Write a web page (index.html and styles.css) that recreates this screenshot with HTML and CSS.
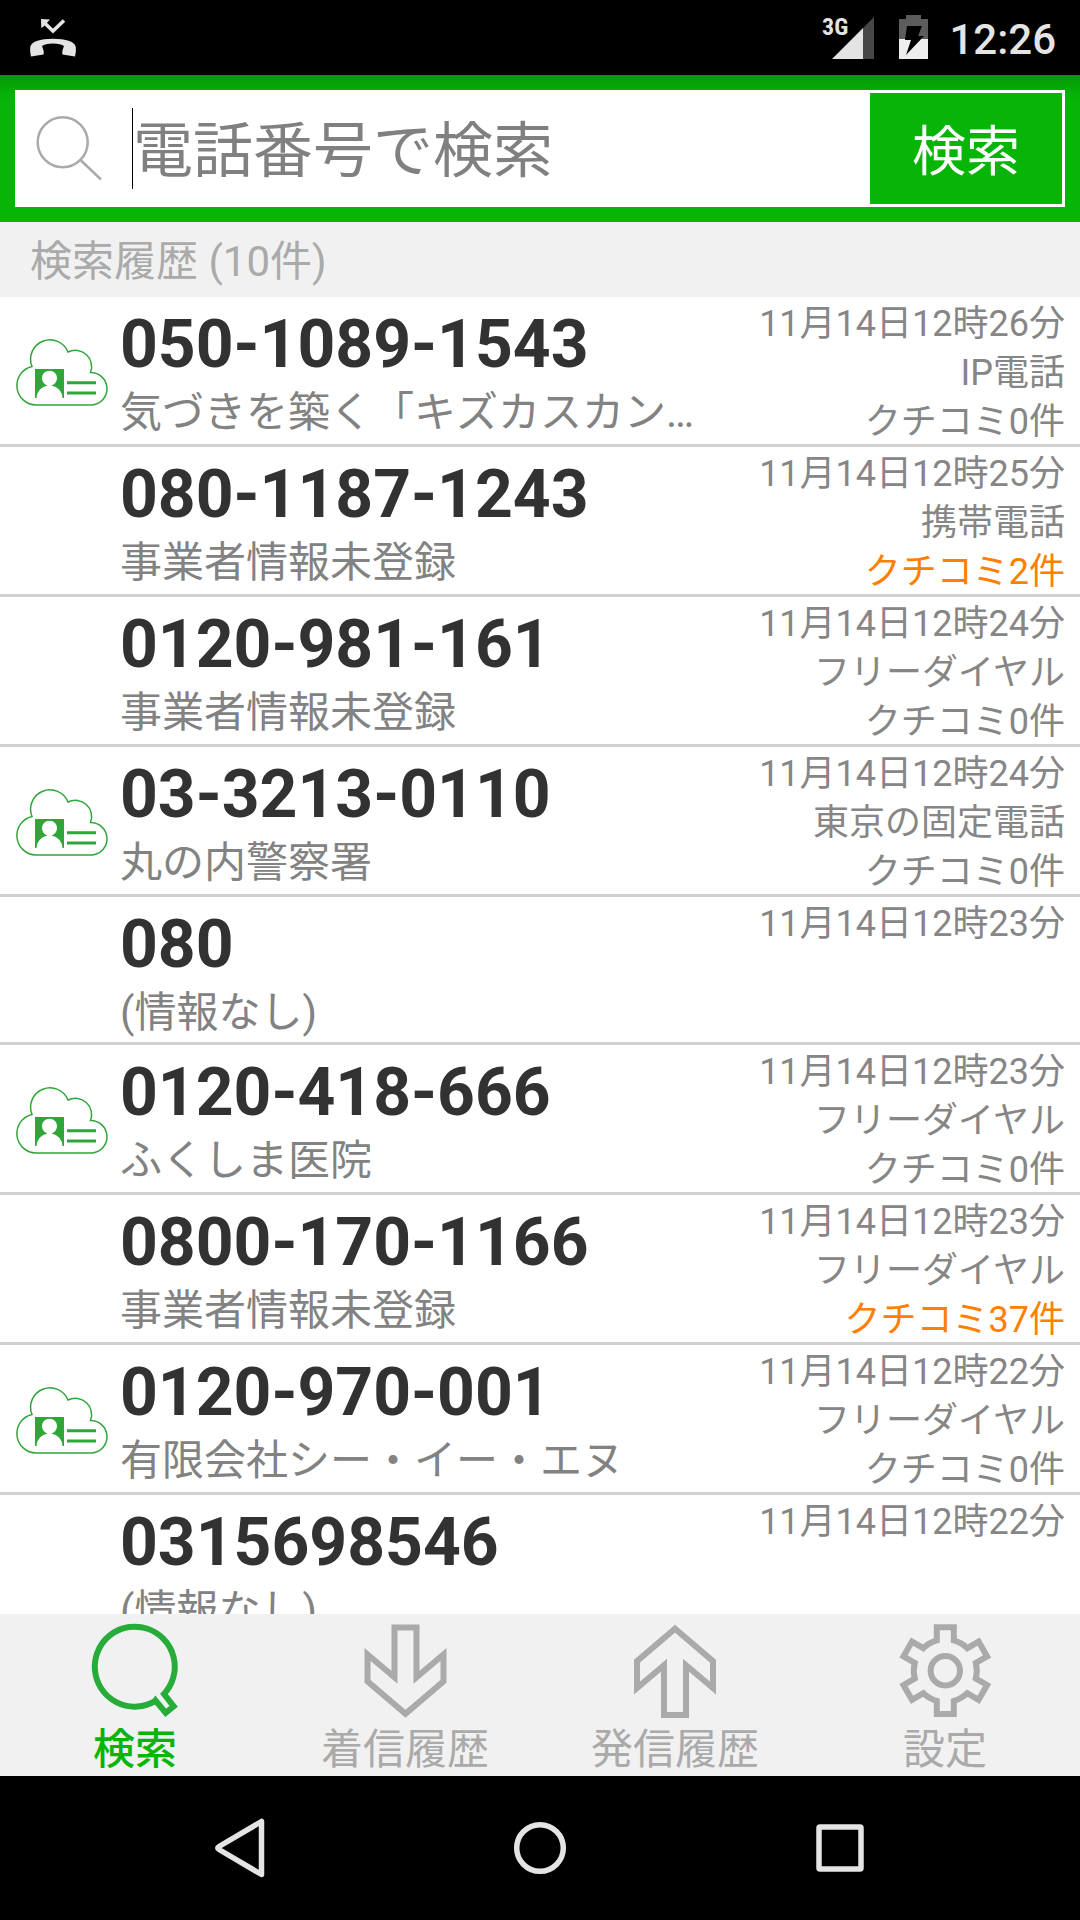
FILE: index.html
```html
<!DOCTYPE html>
<html lang="ja">
<head>
<meta charset="utf-8">
<meta name="viewport" content="width=device-width, initial-scale=1">
<title>検索履歴</title>
<link rel="stylesheet" href="styles.css">
</head>
<body>
<svg class="defs" aria-hidden="true">
  <symbol id="cloud" viewBox="0 0 120 100">
    <path d="M32 45.500A19.500 19.500 0 0 0 36 84H92.500A16.300 16.300 0 0 0 90.500 51.500A16.300 16.300 0 0 0 68 31A19.400 19.400 0 0 0 32 45.500Z" fill="none" stroke="#2fa53a" stroke-width="1.500"/>
    <path d="M35 48H64V77H62.500A13 13 0 0 0 51.500 64.400A7.500 7.500 0 1 0 47.500 64.400A13 13 0 0 0 36.500 77H35Z" fill="#2fa53a"/>
    <path d="M67 61.700H96M67 71.900H96" stroke="#2fa53a" stroke-width="3"/>
  </symbol>
</svg>

<header class="status">
  <svg class="status-missed" viewBox="25 0 60 75" role="img" aria-label="不在着信">
    <path d="M45 22.500L54 31L65 20.500" fill="none" stroke="#e4e4e4" stroke-width="3.600"/>
    <path d="M42 19L51 19.500L48.500 22.300L44.500 26.500L42.300 28Z" fill="#e4e4e4"/>
    <path d="M32 56.500Q30.500 50 31.500 46Q34 39 54 38.700Q74 39 76.500 46Q77.500 50 76 56.500L63.500 54.500Q62.500 52 65 46Q62 43.500 54 43.500Q46 43.500 43 46Q45.500 52 44.500 54.500Z" fill="#e4e4e4"/>
  </svg>
  <div class="status-right">
    <svg class="status-signal" viewBox="0 0 54 75" role="img" aria-label="3G">
      <text class="status-net" x="0" y="35">3G</text>
      <path d="M52 17V59H41V28Z" fill="#474747"/>
      <path d="M41 28V59H10Z" fill="#e4e4e4"/>
    </svg>
    <svg class="status-battery" viewBox="0 0 30 75" role="img" aria-label="充電中">
      <path d="M0 19H7V15H22V19H29V39H0Z" fill="#5c5c5c"/>
      <path d="M0 39H29V59H0Z" fill="#eee"/>
      <path d="M8 26H23L19 36H25L7 55L12 40H6Z" fill="#000"/>
    </svg>
    <time class="status-time">12:26</time>
  </div>
</header>

<main class="app">
  <form class="search">
    <div class="search-box">
      <svg class="search-icon" viewBox="0 0 117 117" aria-hidden="true">
        <circle cx="47.700" cy="52.300" r="25"/>
        <path d="M66 70.500L86 89.500"/>
      </svg>
      <input class="search-input" type="tel" placeholder="電話番号で検索" aria-label="電話番号で検索">
      <button class="search-button" type="button">検索</button>
    </div>
  </form>

  <h1 class="heading">検索履歴 (10件)</h1>

  <ul class="list">
    <li class="row">
      <svg class="row-icon" aria-hidden="true"><use href="#cloud"/></svg>
      <div class="row-main"><h2 class="number">050-1089-1543</h2><p class="name">気づきを築く「キズカスカン…</p></div>
      <div class="row-meta"><span>11月14日12時26分</span><span>IP電話</span><span>クチコミ0件</span></div>
    </li>
    <li class="row">
      <div class="row-main"><h2 class="number">080-1187-1243</h2><p class="name">事業者情報未登録</p></div>
      <div class="row-meta"><span>11月14日12時25分</span><span>携帯電話</span><span class="hot">クチコミ2件</span></div>
    </li>
    <li class="row">
      <div class="row-main"><h2 class="number">0120-981-161</h2><p class="name">事業者情報未登録</p></div>
      <div class="row-meta"><span>11月14日12時24分</span><span>フリーダイヤル</span><span>クチコミ0件</span></div>
    </li>
    <li class="row">
      <svg class="row-icon" aria-hidden="true"><use href="#cloud"/></svg>
      <div class="row-main"><h2 class="number">03-3213-0110</h2><p class="name">丸の内警察署</p></div>
      <div class="row-meta"><span>11月14日12時24分</span><span>東京の固定電話</span><span>クチコミ0件</span></div>
    </li>
    <li class="row">
      <div class="row-main"><h2 class="number">080</h2><p class="name">(情報なし)</p></div>
      <div class="row-meta"><span>11月14日12時23分</span></div>
    </li>
    <li class="row">
      <svg class="row-icon" aria-hidden="true"><use href="#cloud"/></svg>
      <div class="row-main"><h2 class="number">0120-418-666</h2><p class="name">ふくしま医院</p></div>
      <div class="row-meta"><span>11月14日12時23分</span><span>フリーダイヤル</span><span>クチコミ0件</span></div>
    </li>
    <li class="row">
      <div class="row-main"><h2 class="number">0800-170-1166</h2><p class="name">事業者情報未登録</p></div>
      <div class="row-meta"><span>11月14日12時23分</span><span>フリーダイヤル</span><span class="hot">クチコミ37件</span></div>
    </li>
    <li class="row">
      <svg class="row-icon" aria-hidden="true"><use href="#cloud"/></svg>
      <div class="row-main"><h2 class="number">0120-970-001</h2><p class="name">有限会社シー・イー・エヌ</p></div>
      <div class="row-meta"><span>11月14日12時22分</span><span>フリーダイヤル</span><span>クチコミ0件</span></div>
    </li>
    <li class="row">
      <div class="row-main"><h2 class="number">0315698546</h2><p class="name">(情報なし)</p></div>
      <div class="row-meta"><span>11月14日12時22分</span></div>
    </li>
  </ul>
</main>

<nav class="tabs">
  <a class="tab tab-active" href="#search">
    <svg class="tab-icon" viewBox="0 0 100 98" aria-hidden="true"><path d="M70 79.200A40 40 0 1 1 79 72L88.700 84.300L80.700 90.800L70.500 78.500Z"/></svg>
    <span class="tab-label">検索</span>
  </a>
  <a class="tab" href="#incoming">
    <svg class="tab-icon" viewBox="0 0 100 98" aria-hidden="true"><path d="M39.500 5.500H61.500V55.300L88.500 32.500V59.300L50.500 91.700L12.500 59.300V32.500L39.500 55.300Z"/></svg>
    <span class="tab-label">着信履歴</span>
  </a>
  <a class="tab" href="#outgoing">
    <svg class="tab-icon" viewBox="0 0 100 98" aria-hidden="true"><path d="M39 93H61V43.200L88 66V39.200L50 6.800L12 39.200V66L39 43.200Z"/></svg>
    <span class="tab-label">発信履歴</span>
  </a>
  <a class="tab" href="#settings">
    <svg class="tab-icon" viewBox="0 0 100 98" aria-hidden="true"><g transform="translate(50.300 48.700)"><path d="M-8.500-30.300V-43.400H8.500V-30.300A31.500 31.500 0 0 1 22-22.500L33.300-29.100L41.800-14.300L30.500-7.800A31.500 31.500 0 0 1 30.500 7.800L41.800 14.300L33.300 29.100L22 22.500A31.500 31.500 0 0 1 8.500 30.300V43.400H-8.500V30.300A31.500 31.500 0 0 1-22 22.500L-33.300 29.100L-41.800 14.300L-30.500 7.800A31.500 31.500 0 0 1-30.500-7.800L-41.800-14.300L-33.300-29.100L-22-22.500A31.500 31.500 0 0 1-8.500-30.300Z"/><circle r="14.700"/></g></svg>
    <span class="tab-label">設定</span>
  </a>
</nav>

<footer class="system">
  <button class="system-button" type="button" aria-label="戻る"><svg viewBox="0 0 72 72"><path d="M57.500 9.500V62.500L15 37.500Q12.500 36 15 34.500Z"/></svg></button>
  <button class="system-button" type="button" aria-label="ホーム"><svg viewBox="0 0 72 72"><circle cx="36" cy="36" r="23.300"/></svg></button>
  <button class="system-button" type="button" aria-label="最近"><svg viewBox="0 0 72 72"><rect x="15" y="15" width="42" height="42" rx="1"/></svg></button>
</footer>
</body>
</html>
```
FILE: styles.css
```css
* {
  box-sizing: border-box;
}

body {
  margin: 0;
  height: 100vh;
  display: flex;
  flex-direction: column;
  overflow: hidden;
  background: #fff;
  font-family: Roboto, "Noto Sans CJK JP", sans-serif;
  font-size: 42px;
}

.defs {
  display: none;
}

h1, h2, p, ul {
  margin: 0;
  padding: 0;
  font-weight: 400;
}

/* Status bar */
.status {
  flex: none;
  height: 75px;
  padding: 0 24px;
  display: flex;
  justify-content: space-between;
  background: #000;
}

.status-missed {
  width: 60px;
  height: 75px;
}

.status-right {
  display: flex;
}

.status-signal {
  width: 54px;
  height: 75px;
  margin-right: 23px;
}

.status-net {
  fill: #e4e4e4;
  font-family: "Roboto Condensed", Roboto, sans-serif;
  font-size: 24px;
  font-weight: 700;
}

.status-battery {
  width: 30px;
  height: 75px;
  margin-right: 20px;
}

.status-time {
  padding-top: 4px;
  color: #e4e4e4;
  font-weight: 500;
  line-height: 71px;
}

/* Application */
.app {
  flex: 1;
  min-height: 0;
  display: flex;
  flex-direction: column;
}

.search {
  flex: none;
  padding: 15px;
  background: linear-gradient(rgba(0, 0, 0, .16), transparent 24px) #06b506;
}

.search-box {
  height: 117px;
  padding-right: 3px;
  display: flex;
  align-items: center;
  background: #fff;
}

.search-icon {
  flex: none;
  width: 117px;
  height: 117px;
  fill: none;
  stroke: #aaa;
  stroke-width: 2.5;
}

.search-input {
  flex: 1;
  min-width: 0;
  height: 81px;
  padding: 5px 0 0;
  border: 0;
  border-left: 1px solid #000;
  border-radius: 0;
  outline: 0;
  background: none;
  color: #323232;
  font: inherit;
  font-size: 60px;
}

.search-input::placeholder {
  color: #808080;
  opacity: 1;
}

.search-button {
  flex: none;
  width: 192px;
  height: 111px;
  padding: 0 0 2px;
  border: 0;
  background: #06b506;
  color: #fff;
  font: inherit;
  font-size: 54px;
}

.heading {
  flex: none;
  padding: 4px 30px 0;
  background: #f1f1f1;
  color: #aaa;
  font-size: 42px;
  line-height: 71px;
}

/* History list */
.list {
  flex: 1;
  min-height: 0;
  overflow-y: auto;
  scrollbar-width: none;
  list-style: none;
}

.row {
  display: grid;
  grid-template-columns: 120px minmax(0, 1fr) auto;
  padding-right: 15px;
  border-bottom: 3px solid #d1d1d1;
}

.row-icon {
  grid-column: 1;
  align-self: center;
  width: 120px;
  height: 100px;
}

.row-main {
  grid-column: 2;
  padding-top: 9px;
}

.number {
  color: #323232;
  font-size: 66px;
  font-weight: 700;
  line-height: 78px;
}

.name {
  overflow: hidden;
  color: #828282;
  font-size: 42px;
  line-height: 58px;
  white-space: nowrap;
  text-overflow: ellipsis;
}

.row-meta {
  grid-column: 3;
  padding-top: 5px;
  display: flex;
  flex-direction: column;
  align-items: flex-end;
  gap: 5px;
  color: #868686;
  font-size: 36px;
  line-height: 44px;
}

.hot {
  color: #ff8000;
}

/* Tab bar */
.tabs {
  flex: none;
  display: grid;
  grid-template-columns: repeat(4, 1fr);
  padding-top: 8px;
  background: #f1f1f1;
}

.tab {
  display: flex;
  flex-direction: column;
  align-items: center;
  color: #aaa;
  text-decoration: none;
}

.tab-label {
  padding-top: 4px;
  line-height: 52px;
}

.tab-active {
  color: #06b506;
  font-weight: 500;
}

.tab-icon {
  width: 100px;
  height: 98px;
  fill: none;
  stroke: #aaa;
  stroke-width: 6;
}

.tab-active .tab-icon {
  stroke: #27ac3a;
}

/* System navigation */
.system {
  flex: none;
  height: 144px;
  padding: 0 90px;
  display: grid;
  grid-template-columns: repeat(3, 1fr);
  background: #000;
}

.system-button {
  padding: 0;
  border: 0;
  background: none;
  display: grid;
  place-items: center;
}

.system-button svg {
  width: 72px;
  height: 72px;
  fill: none;
  stroke: #e4e4e4;
  stroke-width: 5.5;
  stroke-linejoin: round;
}
```
